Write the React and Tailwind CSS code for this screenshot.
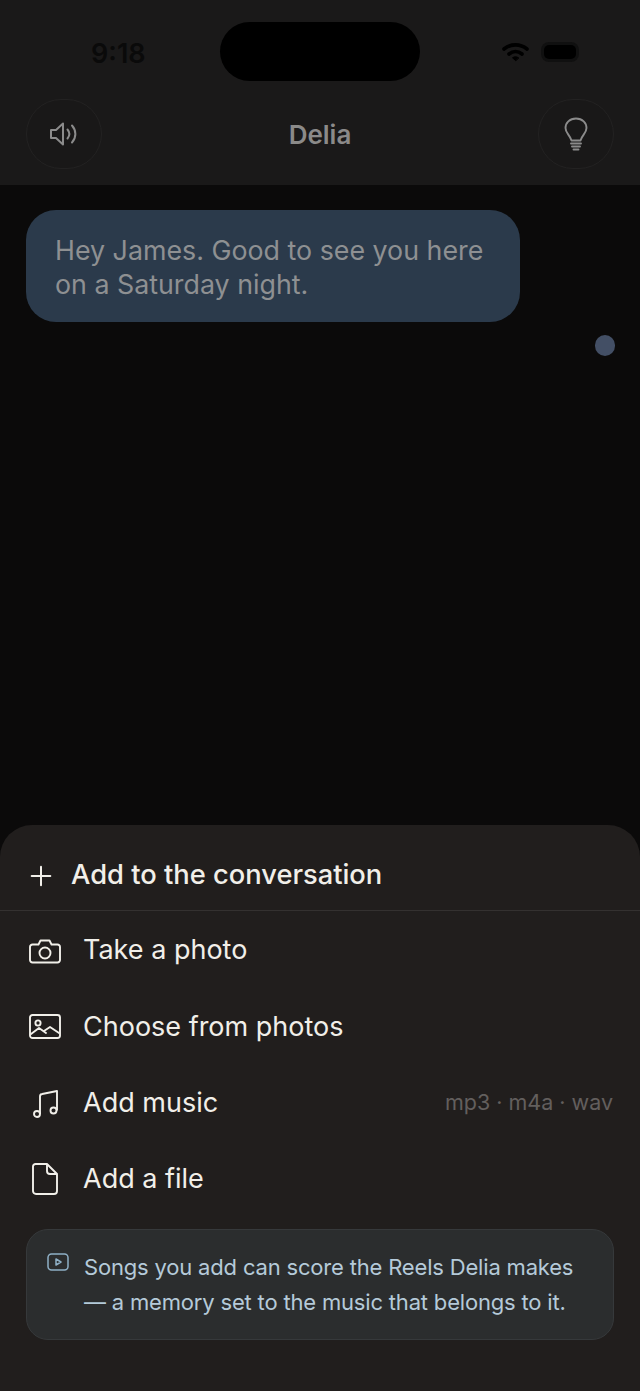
import { Plus } from 'lucide-react'

const font = { fontFamily: 'Inter, sans-serif' }

function CameraIcon() {
  return (
    <svg width="32" height="25" viewBox="0 0 32 25" fill="none" stroke="#f1efe9" strokeWidth="1.9" strokeLinejoin="round">
      <path d="M3.5 5.5H9.5L11.5 1.5H20.5L22.5 5.5H28.5A2.5 2.5 0 0 1 31 8V21A2.5 2.5 0 0 1 28.5 23.5H3.5A2.5 2.5 0 0 1 1 21V8A2.5 2.5 0 0 1 3.5 5.5Z" />
      <circle cx="16" cy="14" r="5.5" />
    </svg>
  )
}

function PhotoIcon() {
  return (
    <svg width="32" height="25" viewBox="0 0 32 25" fill="none" stroke="#f1efe9" strokeWidth="1.9" strokeLinejoin="round" strokeLinecap="round">
      <rect x="1" y="1" width="30" height="23" rx="2.5" />
      <circle cx="9" cy="9" r="2.6" />
      <path d="M2 20l8-6 7 5M15 17l6-4 9 6" />
    </svg>
  )
}

function MusicIcon() {
  return (
    <svg width="27" height="29" viewBox="0 0 27 29" fill="none" stroke="#f1efe9" strokeWidth="1.9" strokeLinejoin="round">
      <circle cx="5" cy="25" r="3" />
      <circle cx="21.5" cy="21.5" r="3" />
      <path d="M8 25V7.5A2.5 2.5 0 0 1 10.2 5L25 2V21.5" />
    </svg>
  )
}

function FileIcon() {
  return (
    <svg width="26" height="32" viewBox="0 0 26 32" fill="none" stroke="#f1efe9" strokeWidth="1.9" strokeLinejoin="round">
      <path d="M3.5 1H15L25 11V28a3 3 0 0 1-3 3H4a3 3 0 0 1-3-3V3.5A2.5 2.5 0 0 1 3.5 1Z" />
      <path d="M15 1v7a3 3 0 0 0 3 3h7" />
    </svg>
  )
}

const rows = [
  { icon: CameraIcon, label: 'Take a photo', nudge: 'translate-y-[1px]' },
  { icon: PhotoIcon, label: 'Choose from photos', nudge: '' },
  { icon: MusicIcon, label: 'Add music', hint: 'mp3 · m4a · wav', nudge: '' },
  { icon: FileIcon, label: 'Add a file', nudge: '' },
]

function StatusBar() {
  return (
    <div className="relative flex h-[99px] items-start justify-between pl-[91px] pr-[64px] pt-[36px]">
      <span className="mt-[2px] text-[27px] leading-[32px] font-semibold text-[#0a0a0a]">9:18</span>
      <div className="absolute left-[220px] top-[22px] h-[59px] w-[200px] rounded-full bg-black" />
      <div className="flex items-center gap-[15px] pt-[6px]">
        <svg width="27" height="20" viewBox="0 0 27 20" fill="none" stroke="#000" strokeWidth="3.6" strokeLinecap="round">
          <path d="M2 7c6.8-5.5 16.2-5.5 23 0" />
          <path d="M7 12c4-3.3 9-3.3 13 0" />
          <path d="M13.5 18.5 10.5 15.8c1.8-1.4 4.200-1.4 6 0z" fill="#000" strokeWidth="1" strokeLinejoin="round" />
        </svg>
        <div className="h-[14px] w-[32px] rounded-[5px] bg-black ring-[3px] ring-[#101010]" />
      </div>
    </div>
  )
}

function RoundButton({ children }) {
  return (
    <div className="flex h-[70px] w-[76px] items-center justify-center rounded-full border border-[#232222] bg-[#191818]">
      {children}
    </div>
  )
}

export default function App() {
  return (
    <div style={font} className="relative flex h-[1391px] w-[640px] flex-col overflow-hidden bg-[#0b0a0a]">
      <header className="h-[185px] shrink-0 bg-[#1a1919]">
        <StatusBar />
        <div className="flex items-center justify-between px-[26px]">
          <RoundButton>
            <svg width="28" height="24" viewBox="0 0 28 24" fill="none" stroke="#8b8b8b" strokeWidth="2" strokeLinecap="round" strokeLinejoin="round">
              <path d="M1 8h5l7-6.5v21L6 16H1z" />
              <path d="M17.5 7.5c2.5 3 2.5 6 0 9" />
              <path d="M22 3.5c4.500 5 4.500 12 0 17" />
            </svg>
          </RoundButton>
          <h1 className="translate-y-px text-[26px] leading-[70px] font-semibold text-[#8b8a89]">Delia</h1>
          <RoundButton>
            <svg width="24" height="34" viewBox="0 0 24 34" fill="none" stroke="#8b8b8b" strokeWidth="1.9" strokeLinecap="round" strokeLinejoin="round">
              <path d="M12 1.5C5.5 1.5 1.5 6 1.5 11c0 5 4.5 7 6 12.5h9c1.5-5.5 6-7.5 6-12.5 0-5-4-9.5-10.5-9.5z" />
              <path d="M7 26.5h10M8 29.5h8M9.5 32.5h5" />
            </svg>
          </RoundButton>
        </div>
      </header>

      <main className="flex-1 pl-[26px] pr-[25px] pt-[25px]">
        <div className="h-[112px] w-[494px] rounded-[30px] bg-[#2b3a4b] px-[29px] pt-[23px] text-[26.8px] leading-[34px] text-[#8e9092]">
          Hey James. Good to see you here
          <br />
          on a Saturday night.
        </div>
        <div className="mt-[13px] flex justify-end">
          <div className="h-[21px] w-[20px] rounded-full bg-[#434f65]" />
        </div>
      </main>

      <section className="h-[566px] shrink-0 rounded-t-[32px] bg-[#211e1d]">
        <div className="flex h-[86px] items-center gap-[14px] border-b border-[#343130] pl-[25px] pt-[16px]">
          <Plus size={32} strokeWidth={1.5} color="#f1efe9" />
          <span className="text-[27.3px] font-medium text-[#f1efe9]">Add to the conversation</span>
        </div>
        <div className="pt-[1.4px]">
          {rows.map((row) => (
            <div key={row.label} className="flex h-[76.3px] items-center pl-[28px] pr-[27px]">
              <div className={`flex h-[34px] w-[34px] items-center justify-center ${row.nudge}`}>
                <row.icon />
              </div>
              <span className="ml-[21px] flex-1 text-[27px] text-[#f1efe9]">{row.label}</span>
              {row.hint && <span className="-translate-y-px text-[21.5px] text-[#635f5d]">{row.hint}</span>}
            </div>
          ))}
        </div>
        <div className="mx-[26px] mt-[11.6px] flex h-[111px] gap-[15px] rounded-[22px] border border-[#36393b] bg-[#2b2d2e] pl-[20px] pt-[20px]">
          <svg className="mt-[3px] shrink-0" width="22" height="18" viewBox="0 0 22 18" fill="none" stroke="#8fb0c6" strokeWidth="1.5">
            <rect x="1" y="1" width="20" height="16" rx="3.5" />
            <path d="M9 6l5 3-5 3z" strokeLinejoin="round" />
          </svg>
          <p className="text-[22px] leading-[35px] tracking-[-0.18px] text-[#b5cad9]">
            Songs you add can score the Reels Delia makes
            <br />— a memory set to the music that belongs to it.
          </p>
        </div>
      </section>
    </div>
  )
}
